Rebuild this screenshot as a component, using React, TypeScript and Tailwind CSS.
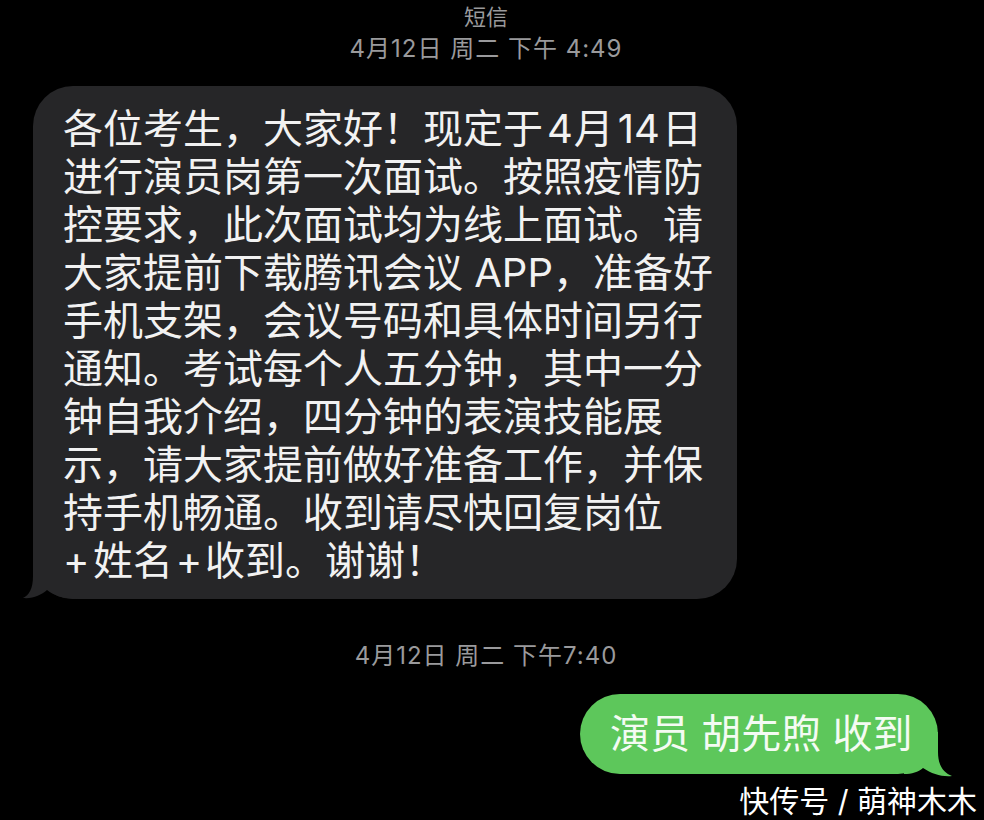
import React from "react";

const lines: React.ReactNode[] = [
  <>
    各位考生，大家好！现定于<span className="ml-[4px] mr-[1px]">4</span>月
    <span className="ml-[4px] mr-[2px]">14</span>日
  </>,
  "进行演员岗第一次面试。按照疫情防",
  "控要求，此次面试均为线上面试。请",
  "大家提前下载腾讯会议 APP，准备好",
  "手机支架，会议号码和具体时间另行",
  "通知。考试每个人五分钟，其中一分",
  "钟自我介绍，四分钟的表演技能展",
  "示，请大家提前做好准备工作，并保",
  "持手机畅通。收到请尽快回复岗位",
  <>
    <span className="inline-block w-[30px] text-left">+</span>姓名
    <span className="inline-block w-[32px] text-center">+</span>收到。谢谢！
  </>,
];

export default function App() {
  return (
    <div
      className="relative w-[984px] h-[820px] overflow-hidden bg-black flex flex-col"
      style={{ fontFamily: 'Inter, "Noto Sans CJK SC", "Noto Sans", sans-serif' }}
    >
      <div className="pt-[3px] pr-[12px] flex flex-col items-center text-[#9a9a9c]">
        <div className="text-[22px] leading-[28px]">短信</div>
        <div className="mt-[2px] text-[24px] leading-[32px] tracking-[1px]">4月12日 周二 下午 4:49</div>
      </div>

      <div className="relative ml-[33px] mt-[21px] w-[704px] rounded-[40px] bg-[#262628] pl-[30px] pt-[19px] pb-[14px] text-[40px] leading-[48px] text-[#f2f2f2]">
        <svg
          className="absolute left-[-14px] bottom-[-2px]"
          width="60"
          height="50"
          viewBox="0 0 60 50"
        >
          <path
            d="M14,0 L14,25 C14,38 10,44 4,47 C14,48 22,44 28,39 C34,44 44,48 60,48 L60,0 Z"
            fill="#262628"
          />
        </svg>
        <div className="relative">
          {lines.map((l, i) => (
            <div key={i} className="whitespace-nowrap">
              {l}
            </div>
          ))}
        </div>
      </div>

      <div className="mt-[41px] pr-[12px] text-center text-[24px] leading-[32px] tracking-[1px] text-[#9a9a9c]">
        4月12日 周二 下午7:40
      </div>

      <div className="self-end mr-[46px] mt-[22px] relative h-[80px] w-[358px] rounded-full bg-[#5dc75b] pl-[30px] flex items-center text-[40px] leading-[48px] text-[#f4fbf3]">
        <svg
          className="absolute right-[-16px] bottom-[-3px]"
          width="50"
          height="45"
          viewBox="0 0 50 45"
        >
          <path
            d="M34,0 L34,20 C34,34 40,41 48,44 C38,45 28,42 19,36 C14,40 8,42 0,42 L0,0 Z"
            fill="#5dc75b"
          />
        </svg>
        <span className="relative whitespace-nowrap">演员 胡先煦 收到</span>
      </div>

      <div className="absolute right-[7px] bottom-[2px] text-[30px] leading-[34px] text-white whitespace-nowrap">
        快传号 / 萌神木木
      </div>
    </div>
  );
}
